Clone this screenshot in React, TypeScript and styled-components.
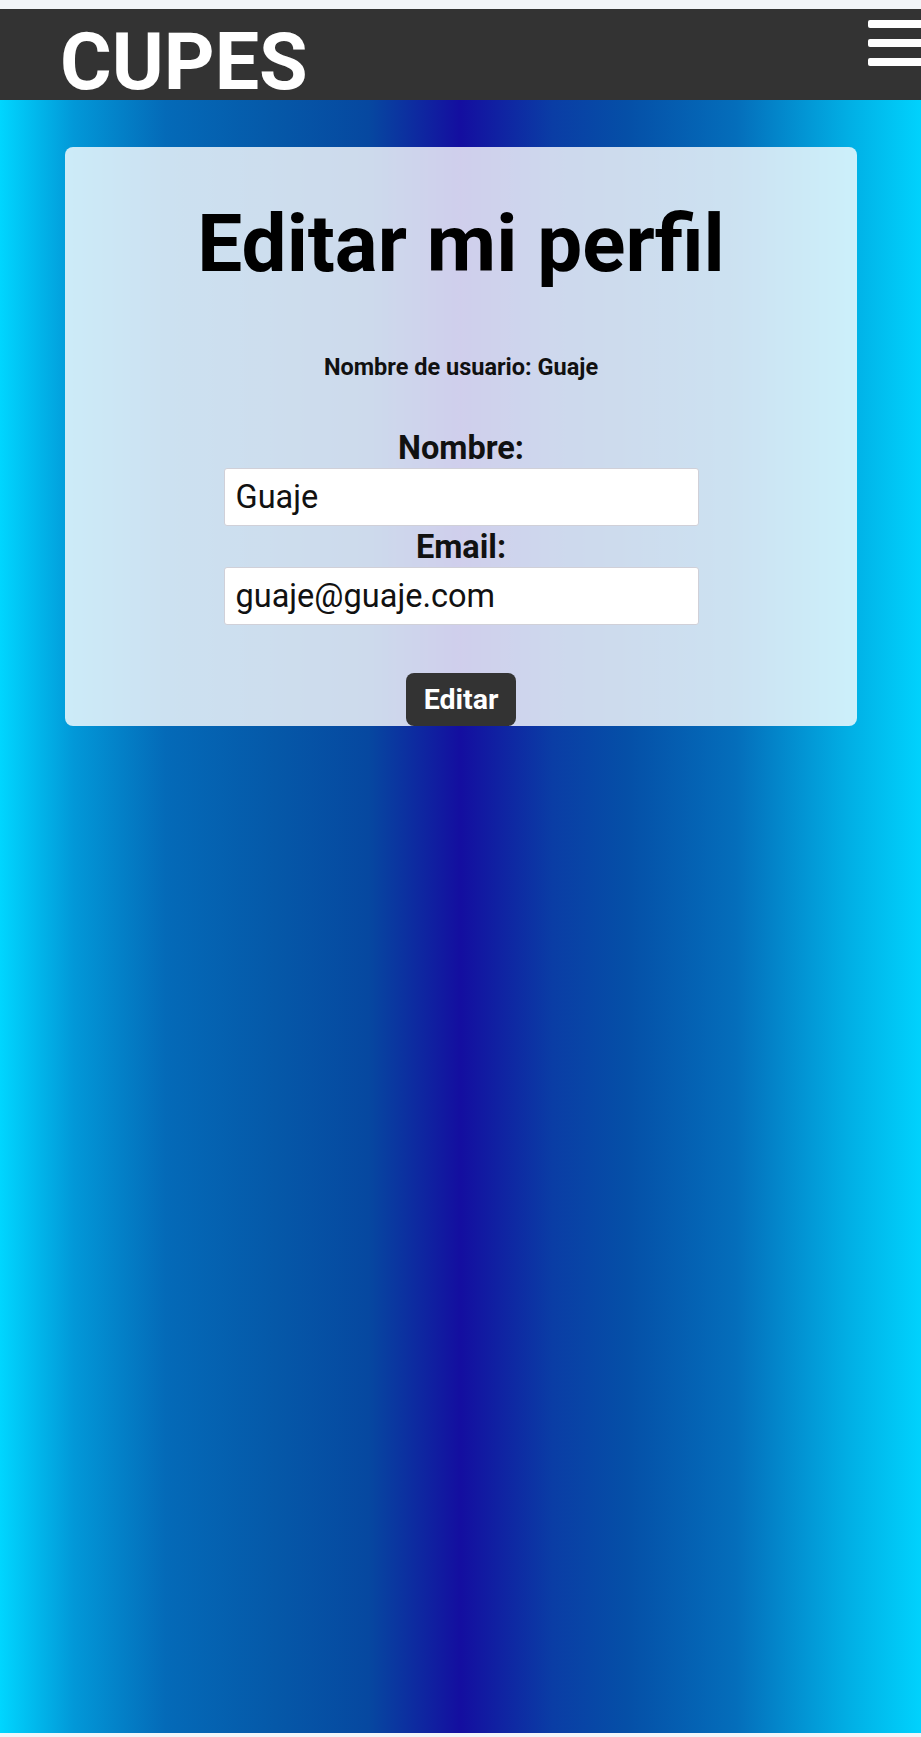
import styled, { createGlobalStyle } from "styled-components";

const GlobalStyle = createGlobalStyle`
  html,
  body {
    margin: 0;
    padding: 0;
    background-color: #f2f5f8;
    font-family: Roboto, "Noto Sans", "Liberation Sans", sans-serif;
  }

  * {
    box-sizing: border-box;
  }
`;

const Page = styled.div`
  padding-top: 9px;
  padding-bottom: 4px;
`;

const Header = styled.header`
  height: 91px;
  background-color: #333333;
  display: flex;
  justify-content: space-between;
  align-items: flex-start;
  padding-left: 60px;
`;

const Logo = styled.h1`
  margin: 7px 0 0;
  font-size: 79px;
  line-height: normal;
  font-weight: 700;
  color: #ffffff;
`;

// the bars run past the right edge of the screen, so they are clipped here
const MenuButton = styled.div`
  width: 53px;
  display: flex;
  flex-direction: column;
  gap: 11px;
  margin-top: 11px;
  overflow: hidden;
`;

const MenuBar = styled.span`
  display: block;
  flex-shrink: 0;
  width: 61px;
  height: 8px;
  border-radius: 2px;
  background-color: #ffffff;
`;

const Main = styled.main`
  height: 1633px;
  padding: 47px 64px 0 65px;
  background: linear-gradient(
    90deg,
    #00d6ff 0%,
    #0298d8 8%,
    #046ab8 18%,
    #0558a8 30%,
    #0648a0 40%,
    #140ea0 50%,
    #0a3da5 60%,
    #054fa7 68%,
    #046ebb 80%,
    #01aee4 92%,
    #00d2fd 100%
  );
`;

const Card = styled.section`
  display: flex;
  flex-direction: column;
  align-items: center;
  background-color: rgba(255, 255, 255, 0.8);
  border-radius: 8px;
  padding-top: 50px;
`;

const Title = styled.h2`
  margin: 0;
  font-size: 80px;
  font-weight: 700;
  color: #000000;
`;

const Username = styled.p`
  margin: 62px 0 0;
  font-size: 23.5px;
  font-weight: 700;
  color: #111111;
`;

const Form = styled.form`
  display: flex;
  flex-direction: column;
  align-items: center;
  margin-top: 50px;
`;

const Label = styled.label<{ $spaceTop?: number }>`
  margin-top: ${({ $spaceTop }) => $spaceTop ?? 0}px;
  font-size: 32.5px;
  line-height: 35px;
  font-weight: 700;
  color: #111111;
`;

const Input = styled.input`
  width: 475px;
  height: 58px;
  margin-top: 2px;
  padding: 0 11px;
  font-family: Roboto, "Noto Sans", sans-serif;
  font-size: 32.5px;
  color: #111111;
  background-color: #ffffff;
  border: 1px solid #d0d0d8;
  border-radius: 3px;
  outline: none;
`;

const SubmitButton = styled.button`
  margin-top: 48px;
  height: 53px;
  padding: 0 18px;
  font-family: Roboto, "Noto Sans", sans-serif;
  font-size: 28.5px;
  font-weight: 700;
  color: #ffffff;
  background-color: #333333;
  border: none;
  border-radius: 8px;
  cursor: pointer;
`;

const App = () => {
  return (
    <Page>
      <GlobalStyle />
      <Header>
        <Logo>CUPES</Logo>
        <MenuButton>
          <MenuBar />
          <MenuBar />
          <MenuBar />
        </MenuButton>
      </Header>
      <Main>
        <Card>
          <Title>Editar mi perfil</Title>
          <Username>Nombre de usuario: Guaje</Username>
          <Form onSubmit={(e) => e.preventDefault()}>
            <Label htmlFor="nombre">Nombre:</Label>
            <Input id="nombre" type="text" defaultValue="Guaje" />
            <Label htmlFor="email" $spaceTop={4}>
              Email:
            </Label>
            <Input id="email" type="email" defaultValue="guaje@guaje.com" />
            <SubmitButton type="submit">Editar</SubmitButton>
          </Form>
        </Card>
      </Main>
    </Page>
  );
};

export default App;
